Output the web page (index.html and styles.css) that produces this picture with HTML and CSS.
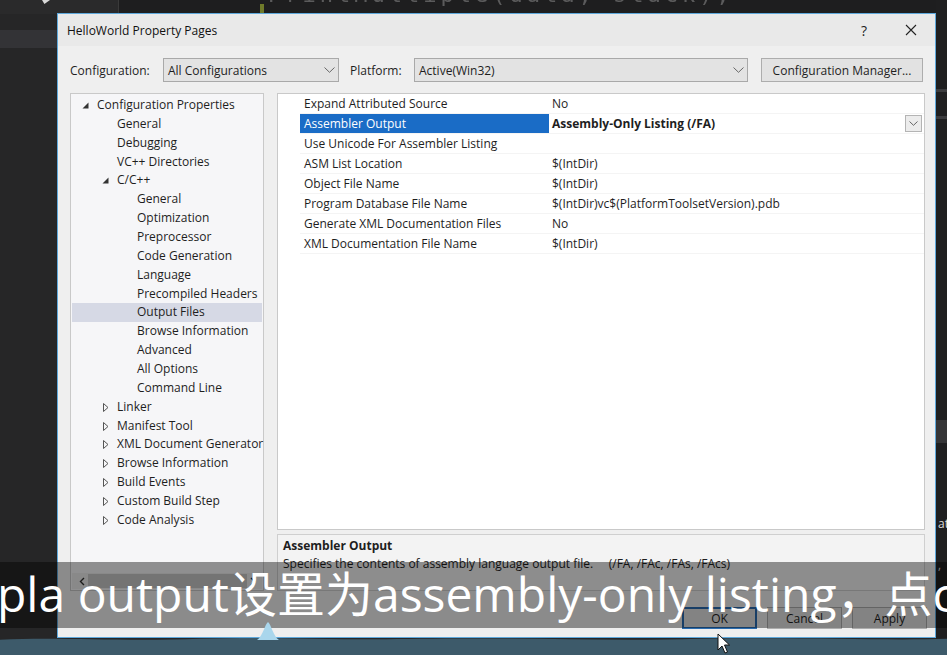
FILE: index.html
```html
<!DOCTYPE html>
<html>
<head>
<meta charset="utf-8">
<link rel="stylesheet" href="styles.css">
</head>
<body>
<div class="ide">
  <div class="ide-top">
    <div class="ide-left"><span class="ide-mark"></span></div>
    <div class="ide-gutter"><span class="chg"></span></div>
    <div class="ide-code">PrintMultiple(data, stack);</div>
  </div>
  <div class="ide-tab"></div>
  <div class="ide-side">
    <span class="side-band b1"></span>
    <span class="side-band b2"></span>
    <span class="side-band b3"></span>
    <span class="side-txt t1">at</span>
    <span class="side-txt t2">,</span>
  </div>
</div>

<div class="dialog">
  <div class="titlebar">
    <span class="title">HelloWorld Property Pages</span>
    <span class="tb-help">?</span>
    <svg class="tb-close" width="12" height="12" viewBox="0 0 12 12"><path d="M1 1L11 11M11 1L1 11" stroke="#222" stroke-width="1.1" fill="none"/></svg>
  </div>
  <div class="dlg-body">
    <div class="config-row">
      <span class="lbl lbl-config">Configuration:</span>
      <div class="combo combo-config"><span>All Configurations</span><svg class="chev" width="11" height="6" viewBox="0 0 11 6"><path d="M0.5 0.5L5.5 5.3L10.5 0.5" stroke="#666" fill="none"/></svg></div>
      <span class="lbl lbl-plat">Platform:</span>
      <div class="combo combo-plat"><span>Active(Win32)</span><svg class="chev" width="11" height="6" viewBox="0 0 11 6"><path d="M0.5 0.5L5.5 5.3L10.5 0.5" stroke="#666" fill="none"/></svg></div>
      <div class="btn btn-cm">Configuration Manager...</div>
    </div>

    <div class="main">
      <div class="tree">
        <div class="tree-list">
          <div class="node l0"><svg class="tri" width="7" height="7" viewBox="0 0 7 7"><path d="M6.5 0.5V6.5H0.5Z" fill="#333"/></svg>Configuration Properties</div>
          <div class="node l1">General</div>
          <div class="node l1">Debugging</div>
          <div class="node l1">VC++ Directories</div>
          <div class="node l1 exp"><svg class="tri" width="7" height="7" viewBox="0 0 7 7"><path d="M6.5 0.5V6.5H0.5Z" fill="#333"/></svg>C/C++</div>
          <div class="node l2">General</div>
          <div class="node l2">Optimization</div>
          <div class="node l2">Preprocessor</div>
          <div class="node l2">Code Generation</div>
          <div class="node l2">Language</div>
          <div class="node l2">Precompiled Headers</div>
          <div class="node l2 sel">Output Files</div>
          <div class="node l2">Browse Information</div>
          <div class="node l2">Advanced</div>
          <div class="node l2">All Options</div>
          <div class="node l2">Command Line</div>
          <div class="node l1 col"><svg class="tri" width="6" height="9" viewBox="0 0 6 9"><path d="M0.5 0.5L5 4.5L0.5 8.5Z" fill="none" stroke="#555"/></svg>Linker</div>
          <div class="node l1 col"><svg class="tri" width="6" height="9" viewBox="0 0 6 9"><path d="M0.5 0.5L5 4.5L0.5 8.5Z" fill="none" stroke="#555"/></svg>Manifest Tool</div>
          <div class="node l1 col"><svg class="tri" width="6" height="9" viewBox="0 0 6 9"><path d="M0.5 0.5L5 4.5L0.5 8.5Z" fill="none" stroke="#555"/></svg>XML Document Generator</div>
          <div class="node l1 col"><svg class="tri" width="6" height="9" viewBox="0 0 6 9"><path d="M0.5 0.5L5 4.5L0.5 8.5Z" fill="none" stroke="#555"/></svg>Browse Information</div>
          <div class="node l1 col"><svg class="tri" width="6" height="9" viewBox="0 0 6 9"><path d="M0.5 0.5L5 4.5L0.5 8.5Z" fill="none" stroke="#555"/></svg>Build Events</div>
          <div class="node l1 col"><svg class="tri" width="6" height="9" viewBox="0 0 6 9"><path d="M0.5 0.5L5 4.5L0.5 8.5Z" fill="none" stroke="#555"/></svg>Custom Build Step</div>
          <div class="node l1 col"><svg class="tri" width="6" height="9" viewBox="0 0 6 9"><path d="M0.5 0.5L5 4.5L0.5 8.5Z" fill="none" stroke="#555"/></svg>Code Analysis</div>
        </div>
        <div class="hscroll">
          <svg class="arr" width="6" height="9" viewBox="0 0 6 9"><path d="M5 1L1.5 4.5L5 8" stroke="#333" stroke-width="1.4" fill="none"/></svg>
          <span class="thumb"></span>
          <svg class="arr" width="6" height="9" viewBox="0 0 6 9"><path d="M1 1L4.5 4.5L1 8" stroke="#333" stroke-width="1.4" fill="none"/></svg>
        </div>
      </div>

      <div class="right">
        <div class="grid">
          <div class="row"><span class="name">Expand Attributed Source</span><span class="val">No</span></div>
          <div class="row selrow"><span class="name">Assembler Output</span><span class="val bold">Assembly-Only Listing (/FA)</span><span class="dd"><svg width="9" height="5" viewBox="0 0 9 5"><path d="M0.5 0.5L4.5 4.3L8.5 0.5" stroke="#666" fill="none"/></svg></span></div>
          <div class="row"><span class="name">Use Unicode For Assembler Listing</span><span class="val"></span></div>
          <div class="row"><span class="name">ASM List Location</span><span class="val">$(IntDir)</span></div>
          <div class="row"><span class="name">Object File Name</span><span class="val">$(IntDir)</span></div>
          <div class="row"><span class="name">Program Database File Name</span><span class="val">$(IntDir)vc$(PlatformToolsetVersion).pdb</span></div>
          <div class="row"><span class="name">Generate XML Documentation Files</span><span class="val">No</span></div>
          <div class="row"><span class="name">XML Documentation File Name</span><span class="val">$(IntDir)</span></div>
        </div>
        <div class="desc">
          <div class="desc-title">Assembler Output</div>
          <div class="desc-text">Specifies the contents of assembly language output file.&nbsp;&nbsp;&nbsp;&nbsp; (/FA, /FAc, /FAs, /FAcs)</div>
        </div>
      </div>
    </div>

    <div class="buttons">
      <div class="btn btn-ok">OK</div>
      <div class="btn">Cancel</div>
      <div class="btn">Apply</div>
    </div>
  </div>
</div>

<div class="subtitle"><span class="sub-text">pla output设置为assembly-only listing，点c</span></div>

<div class="taskbar">
  <svg class="wave" width="947" height="20" viewBox="0 0 947 20" preserveAspectRatio="none"><path d="M0 4 C60 1 120 6 200 3 C280 0 330 5 420 3 C520 1 600 6 700 3 C800 1 880 5 947 3 V20 H0Z" fill="#3d5a6a"/></svg>
</div>
<svg class="marker" width="22" height="18" viewBox="0 0 22 18"><path d="M0 18 C6 14 8 2 11 0 C14 2 16 14 22 18Z" fill="#a9d6ec"/></svg>
<svg class="cursor" width="13" height="22" viewBox="0 0 13 22"><path d="M1 1V17L5 13L8 20L10.5 19L7.5 12H12.5Z" fill="#fff" stroke="#111" stroke-width="1"/></svg>
</body>
</html>
```
FILE: styles.css
```css
* { box-sizing: border-box; }
html, body { margin: 0; padding: 0; }
body {
  width: 947px;
  height: 655px;
  overflow: hidden;
  position: relative;
  background: #262627;
  font-family: "Segoe UI", "Open Sans", "Noto Sans", sans-serif;
  font-size: 12px;
  color: #1e1e1e;
}

/* ---------- IDE background ---------- */
.ide { position: absolute; inset: 0; }
.ide-top {
  display: flex;
  height: 14px;
  background: #1e1e1f;
  overflow: hidden;
}
.ide-left { width: 118px; flex: none; background: #2a2a2b; position: relative; }
.ide-mark {
  position: absolute; left: 42px; top: 0;
  width: 8px; height: 4px; background: #d8d8d8;
  clip-path: polygon(0 0, 100% 0, 30% 100%);
}
.ide-gutter { width: 150px; flex: none; position: relative; border-left: 1px solid #3a3a3a; }
.chg { position: absolute; right: 4px; top: 4px; width: 4px; height: 10px; background: #6f7a2a; }
.ide-code {
  font-family: "DejaVu Sans Mono", monospace;
  font-size: 22px;
  line-height: 20px;
  color: #b8b8b8;
  letter-spacing: 4px;
  margin-top: -15px;
  opacity: 0.4;
  white-space: nowrap;
  filter: blur(0.7px);
}
.ide-tab {
  position: absolute; left: 0; top: 30px;
  width: 57px; height: 18px; background: #333336;
}
.ide-side {
  position: absolute; left: 936px; top: 0; width: 11px; height: 655px;
  background: #1f1f20;
}
.side-band { position: absolute; left: 0; width: 11px; height: 3px; background: #3b3b3d; }
.side-band.b1 { top: 89px; }
.side-band.b2 { top: 116px; }
.side-band.b3 { top: 420px; height: 23px; background: #353537; }
.side-txt { position: absolute; left: 2px; color: #dcdcdc; font-size: 12px; }
.side-txt.t1 { top: 515px; }
.side-txt.t2 { top: 556px; }

/* ---------- Dialog ---------- */
.dialog {
  position: absolute;
  left: 57px;
  top: 13px;
  width: 879px;
  height: 625px;
  border: 1px solid #5fa9dc;
  background: #efefef;
  display: flex;
  flex-direction: column;
}
.titlebar {
  height: 32px;
  flex: none;
  background: #e9e9e9;
  display: flex;
  align-items: center;
  padding-left: 9px;
  position: relative;
}
.title { flex: 1; font-size: 12px; color: #111; }
.tb-help { font-size: 14px; color: #222; margin-right: 38px; }
.tb-close { margin-right: 18px; }

.dlg-body {
  flex: 1;
  display: flex;
  flex-direction: column;
  padding: 12px 8px 0 12px;
}

.config-row {
  display: flex;
  align-items: center;
  height: 24px;
}
.lbl { color: #1e1e1e; }
.lbl-config { width: 93px; }
.lbl-plat { width: 64px; margin-left: 11px; }
.combo {
  height: 24px;
  background: #e3e3e3;
  border: 1px solid #a9a9a9;
  display: flex;
  align-items: center;
  justify-content: space-between;
  padding: 0 3px 0 4px;
}
.combo-config { width: 176px; }
.combo-plat { width: 334px; }
.btn {
  height: 22px;
  width: 75px;
  background: #e2e2e2;
  border: 1px solid #adadad;
  display: flex;
  align-items: center;
  justify-content: center;
  color: #1e1e1e;
}
.btn-cm { width: 162px; height: 24px; margin-left: 13px; }

.main {
  display: flex;
  gap: 13px;
  margin-top: 11px;
  margin-right: 2px;
  height: 498px;
}

/* tree */
.tree {
  width: 194px;
  flex: none;
  background: #f6f6f8;
  border: 1px solid #c9c9c9;
  display: flex;
  flex-direction: column;
  padding: 2px 1px 1px;
}
.tree-list { flex: 1; }
.node {
  height: 18.86px;
  line-height: 18.86px;
  white-space: nowrap;
  position: relative;
  color: #1e1e1e;
}
.node .tri { position: absolute; top: 6px; }
.node.col .tri { top: 5px; }
.l0 { padding-left: 25px; }
.l0 .tri { left: 10px; }
.l1 { padding-left: 45px; }
.l1 .tri { left: 30px; }
.l1.col .tri { left: 31px; }
.l2 { padding-left: 65px; }
.node.sel { background: #d6d9e5; }

.hscroll {
  height: 16px;
  display: flex;
  align-items: center;
  gap: 3px;
  padding: 0 6px 0 7px;
  background: #ececec;
}
.thumb { flex: 1; height: 14px; background: #c8c8c8; }

/* property grid */
.right {
  flex: 1;
  display: flex;
  flex-direction: column;
  gap: 4px;
}
.grid {
  height: 437px;
  background: #fff;
  border: 1px solid #c9c9c9;
  padding-left: 22px;
}
.row {
  height: 20px;
  display: flex;
  align-items: center;
  border-bottom: 1px solid #f4f4f4;
  position: relative;
}
.name {
  width: 249px;
  padding-left: 4px;
  height: 100%;
  display: flex;
  align-items: center;
  white-space: nowrap;
}
.val { padding-left: 3px; white-space: nowrap; }
.val.bold { font-weight: 700; }
.selrow .name { background: #1a6cc6; color: #fff; }
.dd {
  position: absolute;
  right: 2px;
  top: 1px;
  width: 17px;
  height: 17px;
  border: 1px solid #b4b4b4;
  background: #ececec;
  display: flex;
  align-items: center;
  justify-content: center;
}
.desc {
  flex: 1;
  border: 1px solid #cfcfcf;
  background: #f3f3f3;
  padding: 3px 5px;
}
.desc-title { font-weight: 700; line-height: 16px; }
.desc-text { line-height: 18px; margin-top: 1px; }

.buttons {
  display: flex;
  justify-content: flex-end;
  gap: 10px;
  margin-top: 16px;
}
.btn-ok { border: 2px solid #2a6cb0; }

/* ---------- overlays ---------- */
.subtitle {
  position: absolute;
  left: 0;
  top: 562px;
  width: 947px;
  height: 66px;
  background: rgba(0, 0, 0, 0.42);
  overflow: hidden;
}
.sub-text {
  display: block;
  margin-left: -3px;
  white-space: nowrap;
  font-family: "Open Sans", "Noto Sans CJK SC", sans-serif;
  font-size: 48px;
  line-height: 64px;
  color: #fff;
}
.taskbar {
  position: absolute;
  left: 0;
  top: 636px;
  width: 947px;
  height: 19px;
}
.wave { display: block; width: 947px; height: 19px; }
.marker { position: absolute; left: 257px; top: 622px; }
.cursor { position: absolute; left: 717px; top: 633px; }
```
